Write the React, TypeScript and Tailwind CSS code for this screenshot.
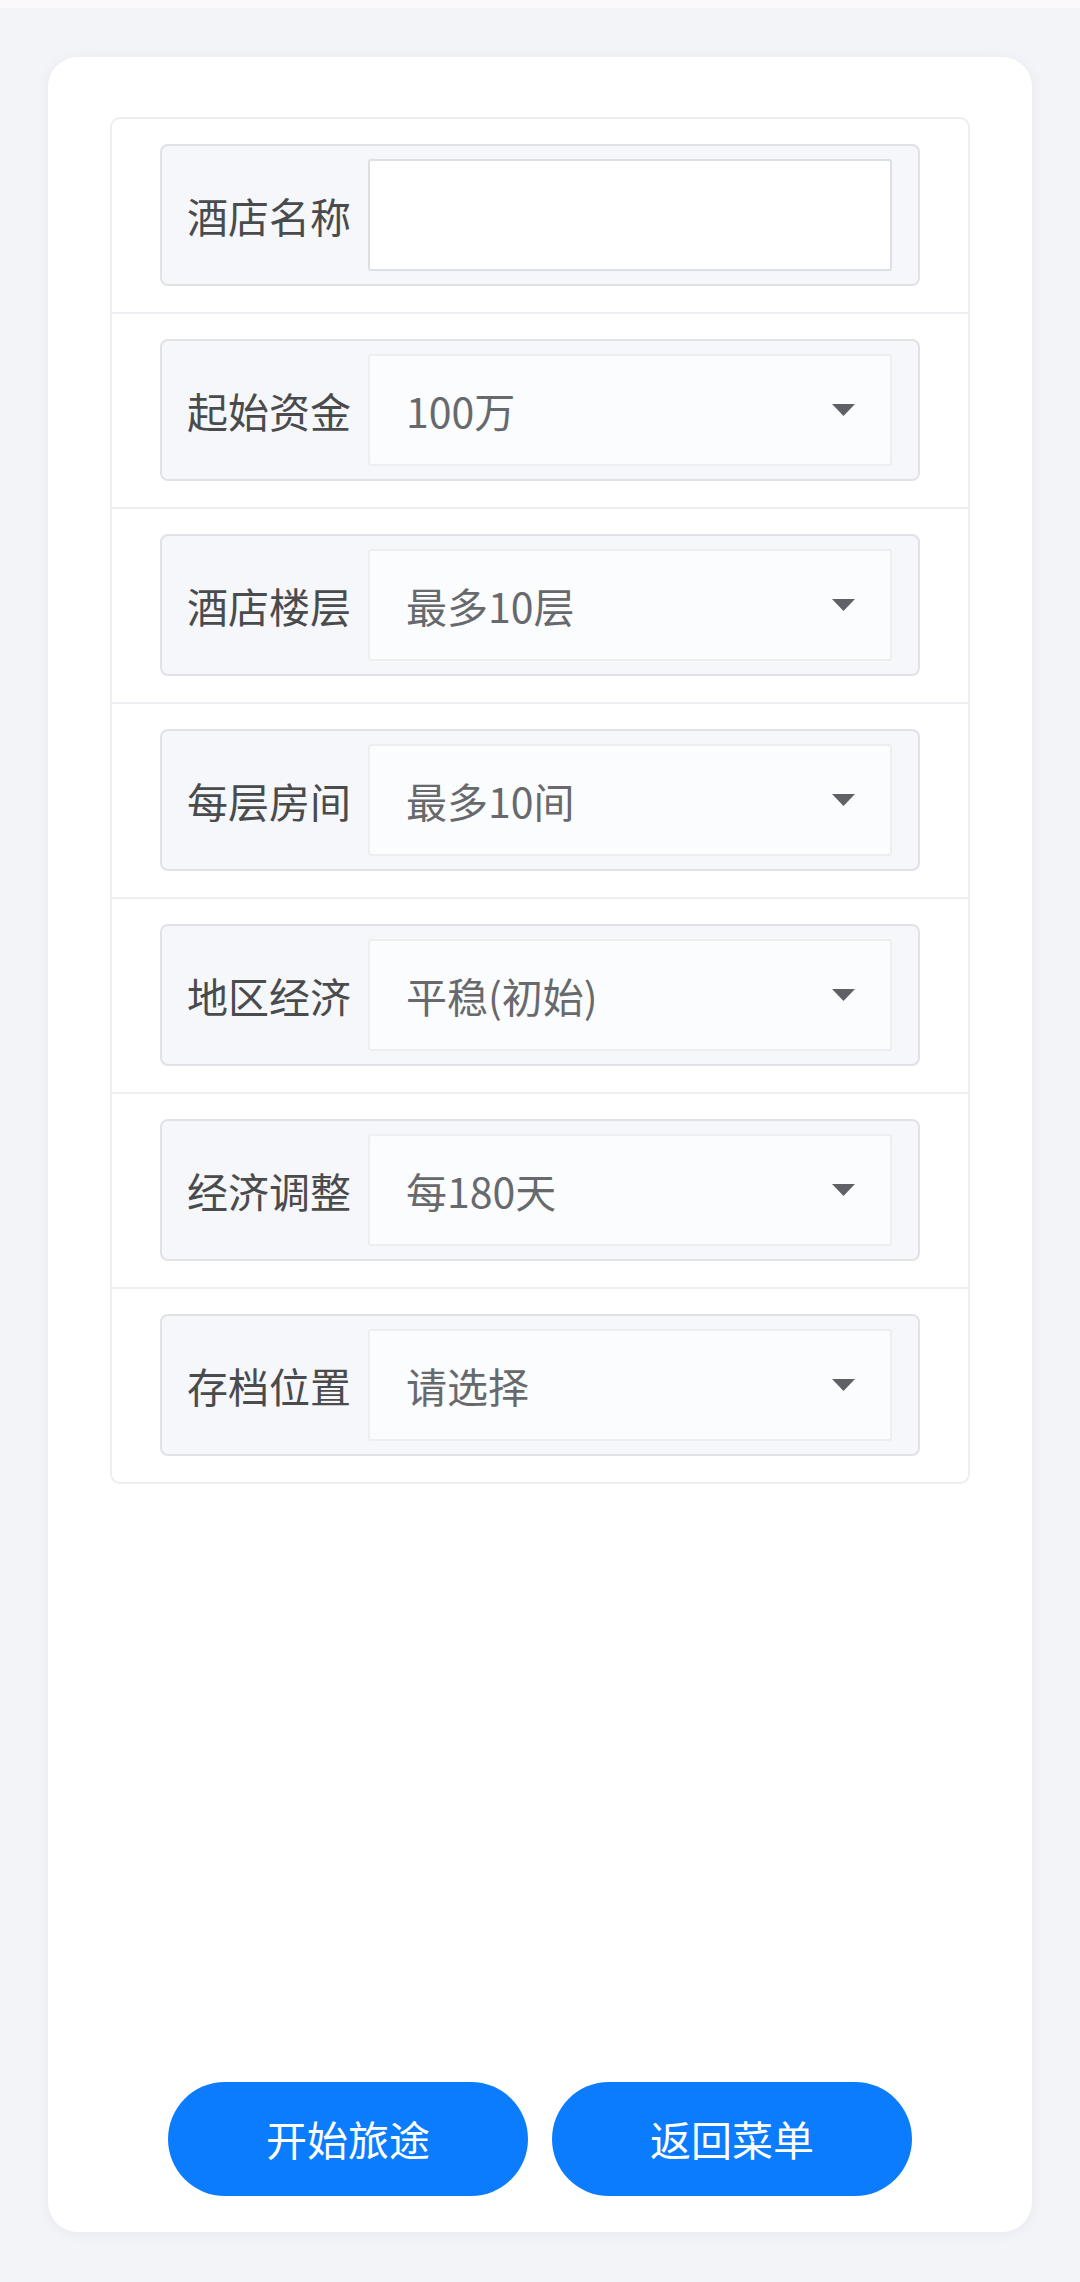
import { ChangeEvent, useState } from 'react'

type Field = {
  label: string
  value: string
  options: string[]
}

const FIELDS: Field[] = [
  { label: '起始资金', value: '100万', options: ['50万', '100万', '200万', '500万'] },
  { label: '酒店楼层', value: '最多10层', options: ['最多5层', '最多10层', '最多20层'] },
  { label: '每层房间', value: '最多10间', options: ['最多5间', '最多10间', '最多20间'] },
  { label: '地区经济', value: '平稳(初始)', options: ['萧条', '平稳(初始)', '繁荣'] },
  { label: '经济调整', value: '每180天', options: ['每90天', '每180天', '每360天'] },
  { label: '存档位置', value: '请选择', options: ['请选择', '存档1', '存档2', '存档3'] },
]

const FONT = "font-['Noto_Sans_CJK_SC','Noto_Sans',sans-serif]"

function Caret() {
  return (
    <svg width="23" height="12" viewBox="0 0 23 12" className="shrink-0">
      <path d="M0 0 H23 L11.5 12 Z" fill="#5f6166" />
    </svg>
  )
}

function Row({ label, last, children }: { label: string; last?: boolean; children: React.ReactNode }) {
  return (
    <div className={`px-[48px] pt-[25px] pb-[26px] ${last ? '' : 'border-b-2 border-[#eeeff2]'}`}>
      <div className="flex h-[142px] items-center gap-[15px] rounded-[8px] border-2 border-[#e0e2e6] bg-[#f5f7fa] px-[25px]">
        <span className="w-[166px] shrink-0 text-[41px] leading-none text-[#4a4b4d]">{label}</span>
        {children}
      </div>
    </div>
  )
}

export default function App() {
  const [name, setName] = useState('')
  const [values, setValues] = useState<string[]>(FIELDS.map(f => f.value))

  const handleChange = (i: number) => (e: ChangeEvent<HTMLSelectElement>) => {
    const next = [...values]
    next[i] = e.target.value
    setValues(next)
  }

  return (
    <div className={`min-h-[2282px] w-[1080px] bg-[#f3f4f8] ${FONT}`}>
      <div className="h-[8px] bg-[#fcf9fc]" />
      <div className="mx-[48px] mt-[49px] flex h-[2175px] w-[984px] flex-col rounded-[30px] bg-white shadow-[0_2px_14px_rgba(30,40,80,0.05)]">
        {/* settings panel */}
        <div className="mx-[62px] mt-[60px] rounded-[10px] border-2 border-[#eceef1]">
          <Row label="酒店名称">
            <input
              type="text"
              value={name}
              onChange={e => setName(e.target.value)}
              className="h-[112px] w-[524px] rounded-[3px] border-2 border-[#dcdfe3] bg-white px-[36px] text-[41px] text-[#606266] outline-none"
            />
          </Row>
          {FIELDS.map((f, i) => (
            <Row key={f.label} label={f.label} last={i === FIELDS.length - 1}>
              <label className="relative flex h-[112px] w-[524px] items-center justify-between rounded-[3px] border-2 border-[#eceef0] bg-[#fbfcfd] pl-[36px] pr-[35px]">
                <span className="text-[41px] leading-none text-[#67696d]">{values[i]}</span>
                <Caret />
                <select
                  value={values[i]}
                  onChange={handleChange(i)}
                  className="absolute inset-0 cursor-pointer opacity-0"
                >
                  {f.options.map(o => (
                    <option key={o} value={o}>{o}</option>
                  ))}
                </select>
              </label>
            </Row>
          ))}
        </div>

        <div className="flex-1" />

        <div className="flex justify-center gap-[24px] pb-[36px]">
          <button className="h-[114px] w-[360px] rounded-full bg-[#0a7cfd] text-[41px] text-white">开始旅途</button>
          <button className="h-[114px] w-[360px] rounded-full bg-[#0a7cfd] text-[41px] text-white">返回菜单</button>
        </div>
      </div>
    </div>
  )
}
